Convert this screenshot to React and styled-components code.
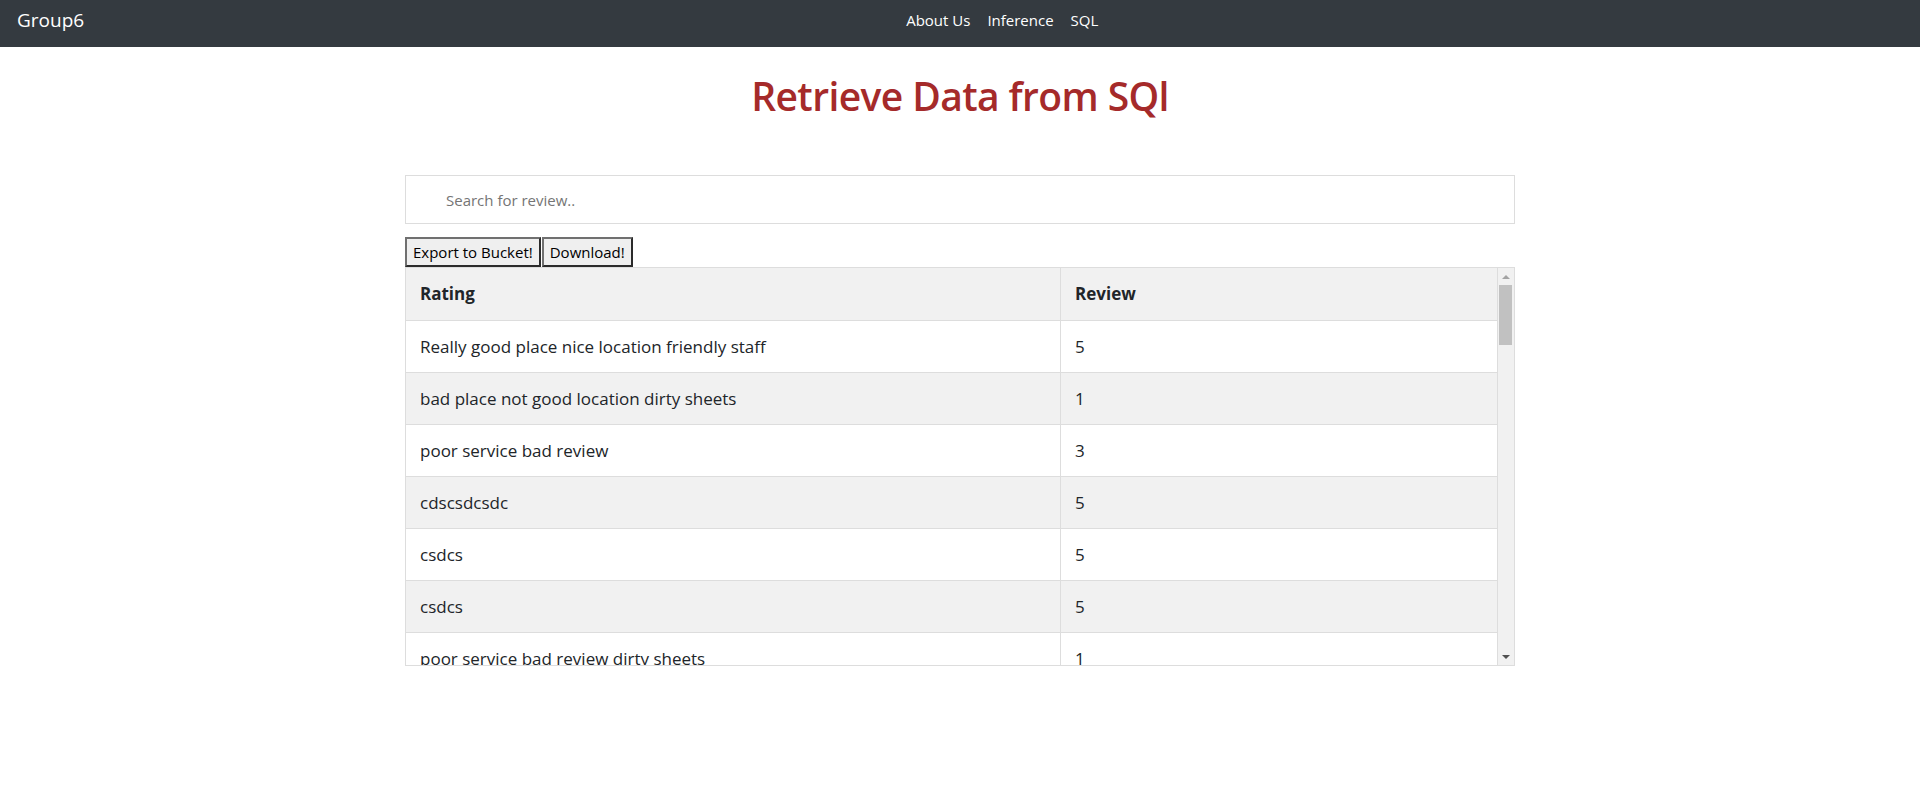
import React from "react";
import styled, { createGlobalStyle } from "styled-components";

const GlobalStyle = createGlobalStyle`
  body {
    margin: 0;
    font-family: "Open Sans", "Noto Sans", sans-serif;
    color: #212529;
    background: #fff;
  }
  * { box-sizing: border-box; }
`;

const Navbar = styled.nav`
  display: flex;
  align-items: center;
  height: 47px;
  padding: 0 16px 7px 17px;
  background-color: #343a40;
`;

const Brand = styled.a`
  color: #fff;
  font-size: 19px;
  text-decoration: none;
`;

const NavList = styled.div`
  display: flex;
  gap: 17px;
  margin-left: 822px;
`;

const NavLink = styled.a`
  color: #fff;
  font-size: 15px;
  text-decoration: none;
`;

const Container = styled.main`
  width: 1110px;
  margin: 0 auto;
`;

const Title = styled.h1`
  margin: 25px 0 55px;
  text-align: center;
  font-size: 39px;
  line-height: 48px;
  font-weight: 600;
  letter-spacing: -0.6px;
  color: #a52a2a;
`;

const SearchInput = styled.input`
  display: block;
  width: 100%;
  height: 49px;
  margin-bottom: 13px;
  padding: 0 0 0 40px;
  border: 1px solid #ddd;
  font-family: inherit;
  font-size: 15px;
  color: #212529;
  outline: none;
  &::placeholder { color: #757575; }
`;

const ButtonRow = styled.div`
  display: flex;
  gap: 1px;
`;

const Button = styled.button`
  height: 30px;
  padding: 0 6px;
  background: #efefef;
  border: 2px solid;
  border-color: #707070 #2b2b2b #2b2b2b #707070;
  font-family: inherit;
  font-size: 15px;
  color: #000;
  cursor: pointer;
`;

const TableFrame = styled.div`
  display: flex;
  height: 399px;
  border: 1px solid #ddd;
`;

const TableArea = styled.div`
  flex: 1;
  overflow: hidden;
`;

const ScrollBar = styled.div`
  display: flex;
  flex-direction: column;
  width: 17px;
  background: #f1f1f1;
  border-left: 1px solid #ddd;
`;

const ScrollButton = styled.div`
  display: flex;
  align-items: center;
  justify-content: center;
  height: 17px;
  margin-top: ${(p) => (p.$down ? "auto" : "0")};
`;

const Arrow = styled.span`
  width: 0;
  height: 0;
  border-left: 4px solid transparent;
  border-right: 4px solid transparent;
  ${(p) =>
    p.$down
      ? "border-top: 4px solid #505050;"
      : "border-bottom: 4px solid #a3a3a3;"}
`;

const Thumb = styled.div`
  height: 60px;
  margin: 0 2px 0 1px;
  background: #c1c1c1;
`;

const Table = styled.table`
  width: 100%;
  border-collapse: collapse;
  font-size: 17px;
`;

const Row = styled.tr`
  background: ${(p) => (p.$shaded ? "#f1f1f1" : "#fff")};
`;

const HeadCell = styled.th`
  width: ${(p) => p.$w || "auto"};
  padding: 14px 14px 15px;
  line-height: 23px;
  text-align: left;
  font-weight: 700;
  border-bottom: 1px solid #ddd;
  & + & { border-left: 1px solid #ddd; }
`;

const Cell = styled.td`
  padding: 14px 14px;
  line-height: 23px;
  border-bottom: 1px solid #ddd;
  & + & { border-left: 1px solid #ddd; }
`;

const rows = [
  ["Really good place nice location friendly staff", 5],
  ["bad place not good location dirty sheets", 1],
  ["poor service bad review", 3],
  ["cdscsdcsdc", 5],
  ["csdcs", 5],
  ["csdcs", 5],
  ["poor service bad review dirty sheets", 1],
];

export default function App() {
  return (
    <>
      <GlobalStyle />
      <Navbar>
        <Brand href="#">Group6</Brand>
        <NavList>
          <NavLink href="#">About Us</NavLink>
          <NavLink href="#">Inference</NavLink>
          <NavLink href="#">SQL</NavLink>
        </NavList>
      </Navbar>
      <Container>
        <Title>Retrieve Data from SQl</Title>
        <SearchInput type="text" placeholder="Search for review.." />
        <ButtonRow>
          <Button>Export to Bucket!</Button>
          <Button>Download!</Button>
        </ButtonRow>
        <TableFrame>
          <TableArea>
            <Table>
              <thead>
                <Row $shaded>
                  <HeadCell $w="60%">Rating</HeadCell>
                  <HeadCell>Review</HeadCell>
                </Row>
              </thead>
              <tbody>
                {rows.map((r, i) => (
                  <Row key={i} $shaded={i % 2 === 1}>
                    <Cell>{r[0]}</Cell>
                    <Cell>{r[1]}</Cell>
                  </Row>
                ))}
              </tbody>
            </Table>
          </TableArea>
          <ScrollBar>
            <ScrollButton>
              <Arrow />
            </ScrollButton>
            <Thumb />
            <ScrollButton $down>
              <Arrow $down />
            </ScrollButton>
          </ScrollBar>
        </TableFrame>
      </Container>
    </>
  );
}
